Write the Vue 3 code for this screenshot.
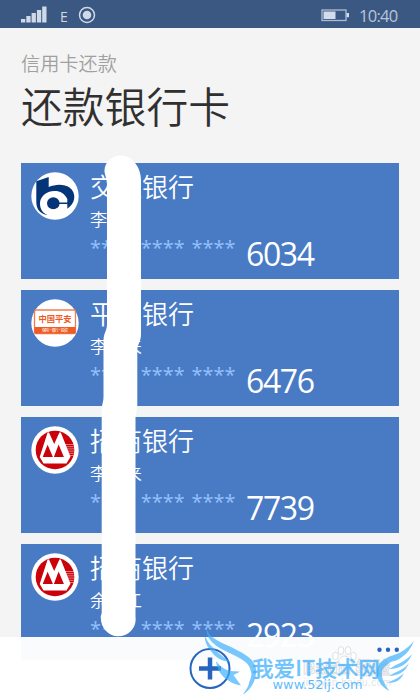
<script setup>
const cards = [
  { logo: 'bocom', bank: '交通银行', owner: '李　', number: '6034' },
  { logo: 'pingan', bank: '平安银行', owner: '李　来', number: '6476' },
  { logo: 'cmb', bank: '招商银行', owner: '李　来', number: '7739' },
  { logo: 'cmb', bank: '招商银行', owner: '余　江', number: '2923' },
]
</script>

<template>
  <div class="phone">
    <header class="status">
      <svg class="signal" width="78" height="24" viewBox="0 0 78 24">
        <g fill="#cfd9e8">
          <path d="M0 15h4.300v3.500H0zM5.300 12h4.300v6.500H5.300zM10.600 9h4.300v9.500h-4.300zM15.900 6h4.300v12.500h-4.300zM21.200 2.500h4.300v16h-4.300z" />
          <circle cx="66" cy="11" r="4.300" />
        </g>
        <circle cx="66" cy="11" r="7.500" fill="none" stroke="#cfd9e8" stroke-width="1.500" />
        <text x="39" y="18" class="edge">E</text>
      </svg>
      <div class="right">
        <svg width="29" height="14" viewBox="0 0 29 14">
          <rect x="1" y="2" width="24" height="10.500" fill="none" stroke="#aebdd4" stroke-width="1.300" />
          <rect x="2.500" y="3.500" width="12" height="7.500" fill="#d3dceb" />
          <rect x="25.500" y="5" width="2.500" height="4.200" fill="#d3dceb" />
        </svg>
        <span class="clock">10:40</span>
      </div>
    </header>

    <div class="heading">
      <div class="sub">信用卡还款</div>
      <h1>还款银行卡</h1>
    </div>

    <main class="list">
      <section v-for="card in cards" :key="card.number" class="card">
        <svg class="logo" viewBox="0 0 48 48">
          <circle cx="24" cy="24" r="23.700" fill="#fff" />
          <template v-if="card.logo === 'bocom'">
            <path fill="#053579" d="M5.300 9.300 17.700 5V15C24 12 33 11.500 38.500 15.500 46 21 44.500 32 35.800 37L20 42.500 16.500 43C9 42 5.300 37 5.300 30Z" />
            <path fill="#fff" d="M36.300 37.500V27C33.500 21.500 29.500 19 23.500 19 15 19 9 25 9 31.500 9 37 12 41.500 16.500 43L24 44 37 38Z" />
            <ellipse cx="22.300" cy="31.200" rx="6.300" ry="6" fill="#053579" />
            <path fill="#053579" d="M26 30.500h11v1.500H26z" />
          </template>
          <template v-else-if="card.logo === 'pingan'">
            <rect x="3.500" y="11" width="41" height="23.500" rx="1.500" fill="#fff" stroke="#f47b50" stroke-width="1.300" />
            <path fill="#ee5b24" d="M3.500 28h41v6.500h-41z" />
            <text x="7.500" y="22.800" textLength="33" class="pa-name">中国平安</text>
            <text x="11" y="32.800" textLength="26" class="pa-sub">保险·银行·投资</text>
          </template>
          <template v-else>
            <circle cx="24" cy="24" r="19.300" fill="#cb0209" />
            <path stroke="#fff" stroke-opacity=".6" stroke-width=".8" d="M34 18.500h8.500M35 20.700h7.700M36 22.900h7M37 25.100h6M38 27.300h4.700M39 29.500h3.500" />
            <path fill="#fff" d="M8.700 31 16.600 6.500H18L23.200 18 28.400 6.500H29.800L39.500 30.700 35.500 37.500H12.500Z" />
            <path fill="#cb0209" d="M11.700 31 16.600 18.800 21.900 31ZM22.900 31 27.600 18.500 32.900 31Z" />
          </template>
        </svg>
        <div class="info">
          <div class="bank">{{ card.bank }}</div>
          <div class="owner">{{ card.owner }}</div>
          <div class="digits"><span class="mask">**** **** ****</span><span class="tail">{{ card.number }}</span></div>
        </div>
      </section>
    </main>

    <svg class="smear" width="50" height="484" viewBox="98 154 50 484">
      <path fill="#fff" d="M104.500 172C104 162 112 155.500 121 155.500 132 155.500 141 167 141 180V334C141 342 138 342 137.300 350V405C137 412 135.500 412 135.500 420V617C137 627 129 636.300 118 636.300 108 636.300 100 627 100.800 616L101.700 613V410C102 403 103.500 403 103.500 396V340C104 332 107 331 107 324V182Z" />
    </svg>

    <footer class="bar">
      <svg width="420" height="63" viewBox="0 0 420 63">
        <g fill="none" stroke="#2865be">
          <circle cx="210" cy="31.500" r="19.500" stroke-width="2" />
          <path stroke-width="4.500" d="M199 31.500h22M210 20.500v22" />
        </g>
        <g fill="#2865be">
          <circle cx="379.500" cy="12.800" r="2.200" /><circle cx="388" cy="12.800" r="2.200" /><circle cx="396.800" cy="12.800" r="2.200" />
        </g>
      </svg>
    </footer>

    <svg class="watermark" width="220" height="80" viewBox="200 620 220 80">
      <g fill="#fff" stroke="#d9dbde" stroke-width=".9">
        <ellipse cx="335.500" cy="656" rx="2.800" ry="3.800" /><ellipse cx="341" cy="650.500" rx="2.800" ry="4" />
        <ellipse cx="348" cy="650.500" rx="2.800" ry="4" /><ellipse cx="353.500" cy="656" rx="2.800" ry="3.800" />
        <path d="M344.500 656c4 0 5 4 7 6 3 4 0 6-3 6h-9c-4 0-5-3-2.500-6 3-2 3.500-6 7.500-6Z" />
        <text x="303" y="674" textLength="87" lengthAdjust="spacingAndGlyphs" class="baidu">Baidu 经验</text>
      </g>
      <text x="303" y="686" textLength="88" class="baidu-url">jingyan.baidu.com</text>
      <g fill="#3aaefc" fill-opacity=".68">
        <path d="M206.700 628C208 634 212 637 216.700 640 223 644 230 646 236.700 650 243 653 248 656 251.700 660 255 664 256.500 668 256 672 256 681 250 691 242.700 694.500 246 690 249 686 249.300 681.700 251 678 252 675 251 671.700 250 667 248 664 245 661.700 240 657.500 235 656 230 653.300 223 650 217 647 213.300 643.300 208 638 206 634 206.700 628Z" />
        <path d="M205 636C208 643 212 647 216.700 651 221 656 226 658 230 662 221 661 215 657 211.700 652 207 646 204.500 642 205 636Z" />
        <path d="M216 661C220 666 223 668 227 670 231 671.500 235 671 240 671.700L233.500 675 241 685.500C236 685 232 683 229 681 222 677 217 670 216 661Z" />
        <path d="M414 640.500C411 649 406 655 399 659 394 662 390 661 388 664 384 667 381 670 382 675 382 680 386 686 389.300 691 382 687 377 681 377 673 377 665 381 661 386 658.500 391 655 396 655 400 652.500 406 649 410 646 414 640.500Z" />
        <path d="M412 654C406 661 399 663 389 669 400 669 409 663 412 654ZM409 663C404 670 397 671 389 676 399 676 406 671 409 663ZM404 673C399 678 395 679 387 683 396 683 401 680 404 673Z" />
      </g>
      <text x="252" y="675.500" textLength="128" lengthAdjust="spacingAndGlyphs" class="wm-name">我爱IT技术网</text>
      <text x="272.500" y="689" textLength="90" lengthAdjust="spacingAndGlyphs" class="wm-url">www.52ij.com</text>
    </svg>
  </div>
</template>

<style>
body { margin: 0; overflow: hidden; }
</style>

<style scoped>
.phone {
  position: relative;
  width: 420px;
  height: 700px;
  overflow: hidden;
  background: #f4f4f4;
  font-family: "Open Sans", "Noto Sans CJK SC", sans-serif;
}
.status {
  height: 28px;
  box-sizing: border-box;
  padding: 4px 22px 0 21px;
  display: flex;
  justify-content: space-between;
  background: #3b5882;
}
.edge { font: 14px "Open Sans", sans-serif; fill: #cfd9e8; }
.right { display: flex; gap: 9px; padding-top: 4px; }
.clock {
  font-size: 16.500px;
  line-height: 15px;
  letter-spacing: -0.700px;
  width: 39px;
  white-space: nowrap;
  color: #b7c5da;
}
.heading { height: 135px; padding: 23px 0 0 21px; box-sizing: border-box; }
.sub { font-size: 19.200px; line-height: 24px; color: #a0a0a0; font-weight: 350; font-family: "Noto Sans CJK SC", sans-serif; }
h1 {
  margin: 3px 0 0;
  font: 350 41.800px/54px "Noto Sans CJK SC", sans-serif;
  color: #303030;
}
.list { display: flex; flex-direction: column; gap: 10.700px; padding: 0 21px; }
.card {
  height: 116.200px;
  flex: none;
  box-sizing: border-box;
  display: flex;
  gap: 11px;
  padding: 9px 0 0 10px;
  background: #487bc4;
}
.logo { width: 48px; height: 48px; flex: none; }
.pa-name { font: 700 8.300px "Noto Sans CJK SC", sans-serif; fill: #ee5b24; }
.pa-sub { font: 4px "Noto Sans CJK SC", sans-serif; fill: #fff; }
.info { color: #fff; white-space: nowrap; margin-top: -1px; }
.bank { font: 350 26px/30px "Noto Sans CJK SC", sans-serif; }
.owner { font: 350 17.300px/22px "Noto Sans CJK SC", sans-serif; margin-top: 7px; }
.digits { display: flex; height: 40px; margin-top: 4px; }
.mask {
  width: 156px;
  font-size: 20px;
  line-height: 28px;
  word-spacing: 1.500px;
  color: #94c0fb;
}
.tail { font-size: 32px; line-height: 39px; letter-spacing: -1.400px; }
.smear { position: absolute; left: 98px; top: 154px; }
.bar {
  position: absolute;
  left: 0;
  bottom: 0;
  width: 420px;
  height: 63px;
  background: rgba(255, 255, 255, 0.970);
}
.bar svg { display: block; }
.watermark { position: absolute; right: 0; bottom: 0; }
.baidu { font: 700 17px "Liberation Sans", "Noto Sans CJK SC", sans-serif; }
.baidu-url { font: 10px "Liberation Sans", sans-serif; fill: #e4e6e8; }
.wm-name { font: 500 21px "Noto Sans CJK SC", sans-serif; fill: #3aaefc; fill-opacity: 0.720; stroke: #3aaefc; stroke-opacity: 0.400; stroke-width: 0.500px; }
.wm-url { font: 12px "DejaVu Sans", sans-serif; fill: #3aaefc; fill-opacity: 0.850; }
</style>
